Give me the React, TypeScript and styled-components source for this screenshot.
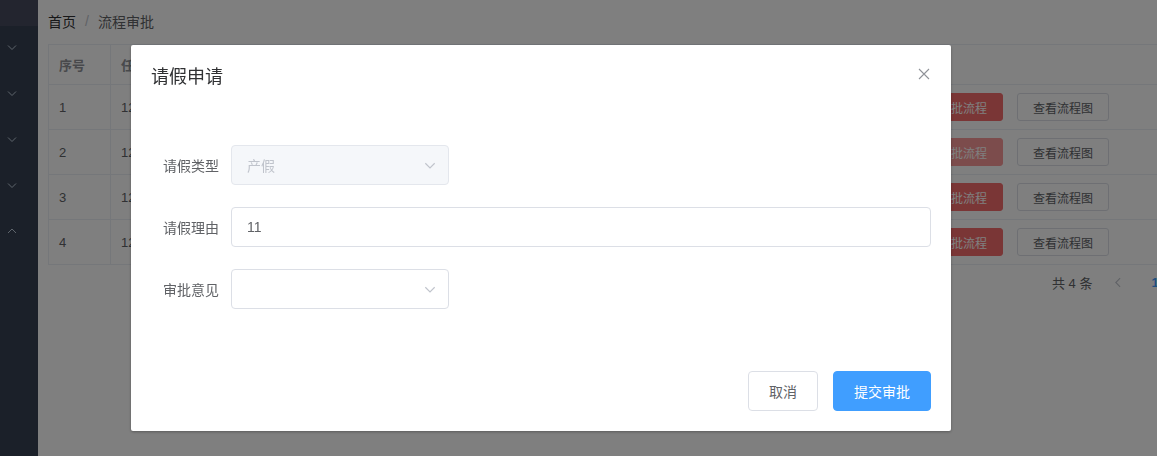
import styled, { createGlobalStyle } from 'styled-components';

const GlobalStyle = createGlobalStyle`
    html, body {
        margin: 0;
        padding: 0;
        height: 100%;
        overflow: hidden;
    }
    body {
        font-family: 'Liberation Sans', 'Noto Sans CJK SC', sans-serif;
        font-size: 14px;
        color: #606266;
        background: #ffffff;
    }
    * {
        box-sizing: border-box;
    }
`;

const Layout = styled.div`
    display: flex;
    width: 100%;
    height: 456px;
`;
const Sidebar = styled.aside`
    width: 38px;
    flex-shrink: 0;
    display: flex;
    flex-direction: column;
    background-color: #364052;
`;
const SideLogo = styled.div`
    height: 26px;
    background-color: #464a5e;
`;
const SideItem = styled.div`
    height: 46px;
    display: flex;
    align-items: center;
    padding-left: 6px;
    padding-bottom: 4px;
    color: #bfcbd9;
`;
const Main = styled.main`
    flex: 1;
    min-width: 0;
    padding: 11px 0 0 10px;
    overflow: hidden;
`;
const Breadcrumb = styled.div`
    display: flex;
    align-items: center;
    height: 20px;
    font-size: 14px;
    color: #303133;
    margin-bottom: 13px;
`;
const Crumb = styled.span<{ $last?: boolean }>`
    color: ${p => (p.$last ? '#606266' : '#303133')};
`;
const Separator = styled.span`
    margin: 0 9px;
    color: #c0c4cc;
`;
const Table = styled.table`
    width: 1200px;
    border-collapse: collapse;
    font-size: 14px;
    color: #606266;
    table-layout: fixed;
`;
const Th = styled.th<{ $w?: number }>`
    width: ${p => (p.$w ? `${p.$w}px` : 'auto')};
    height: 40px;
    padding: 0 10px;
    text-align: left;
    font-weight: 700;
    color: #909399;
    border: 1px solid #ebeef5;
    font-size: 13px;
`;
const Td = styled.td`
    height: 45px;
    padding: 0 10px;
    border: 1px solid #ebeef5;
    white-space: nowrap;
    font-size: 13px;
`;
const Ops = styled.div`
    display: flex;
    gap: 14px;
    padding-left: 2px;
`;
const SmallButton = styled.button<{ $danger?: boolean; $light?: boolean }>`
    height: 28px;
    padding: 0 15px;
    font-size: 12px;
    font-family: inherit;
    border-radius: 3px;
    border: 1px solid
        ${p => (p.$danger ? (p.$light ? '#f89898' : '#f56c6c') : '#dcdfe6')};
    background: ${p =>
        p.$danger ? (p.$light ? '#f89898' : '#f56c6c') : '#ffffff'};
    color: ${p => (p.$danger ? '#ffffff' : '#606266')};
`;
const Pagination = styled.div`
    display: flex;
    align-items: center;
    height: 32px;
    margin-top: 1px;
    padding-left: 1004px;
    font-size: 13px;
    color: #606266;
    white-space: nowrap;
`;
const PageTotal = styled.span`
    margin-right: 20px;
`;
const PagePrev = styled.span`
    color: #c0c4cc;
    margin-right: 26px;
    display: flex;
`;
const PageNum = styled.span`
    color: #409eff;
    font-weight: 700;
`;

const Overlay = styled.div`
    position: fixed;
    inset: 0;
    background: rgba(0, 0, 0, 0.5);
    display: flex;
    align-items: flex-start;
    padding: 45px 0 0 131px;
`;
const Dialog = styled.div`
    width: 820px;
    background: #ffffff;
    border-radius: 2px;
    box-shadow: 0 1px 3px rgba(0, 0, 0, 0.3);
    display: flex;
    flex-direction: column;
`;
const DialogHeader = styled.div`
    display: flex;
    justify-content: space-between;
    align-items: center;
    padding: 20px 20px 10px;
`;
const DialogTitle = styled.span`
    font-size: 18px;
    line-height: 24px;
    color: #303133;
`;
const CloseButton = styled.span`
    display: flex;
    color: #909399;
    margin-top: -7px;
    margin-right: 1px;
`;
const DialogBody = styled.div`
    padding: 46px 20px 30px;
`;
const FormItem = styled.div`
    display: flex;
    align-items: center;
    margin-bottom: 22px;
`;
const Label = styled.label`
    width: 80px;
    padding-right: 12px;
    text-align: right;
    font-size: 14px;
    color: #606266;
`;
const InputBox = styled.div<{ $width?: number; $disabled?: boolean }>`
    width: ${p => (p.$width ? `${p.$width}px` : 'auto')};
    flex: ${p => (p.$width ? 'none' : '1')};
    height: 40px;
    display: flex;
    align-items: center;
    justify-content: space-between;
    padding: 0 15px;
    border: 1px solid ${p => (p.$disabled ? '#e4e7ed' : '#dcdfe6')};
    border-radius: 4px;
    background: ${p => (p.$disabled ? '#f5f7fa' : '#ffffff')};
    color: ${p => (p.$disabled ? '#c0c4cc' : '#606266')};
    font-size: 14px;
`;
const Arrow = styled.span`
    display: flex;
    color: #c0c4cc;
    margin-right: -4px;
`;
const DialogFooter = styled.div`
    display: flex;
    justify-content: flex-end;
    gap: 15px;
    padding: 10px 20px 20px;
`;
const Button = styled.button<{ $primary?: boolean }>`
    height: 40px;
    padding: 0 20px;
    font-size: 14px;
    font-family: inherit;
    border-radius: 4px;
    border: 1px solid ${p => (p.$primary ? '#409eff' : '#dcdfe6')};
    background: ${p => (p.$primary ? '#409eff' : '#ffffff')};
    color: ${p => (p.$primary ? '#ffffff' : '#606266')};
`;

type Dir = 'up' | 'down' | 'left';
const chevronPaths: Record<Dir, string> = {
    up: 'M2 8 L6 4 L10 8',
    down: 'M2 4.5 L6 8.5 L10 4.5',
    left: 'M7.5 2 L3.5 6 L7.5 10',
};
const Chevron = ({ dir = 'down', size = 12 }: { dir?: Dir; size?: number }) => (
    <svg width={size} height={size} viewBox="0 0 12 12" fill="none">
        <path d={chevronPaths[dir]} stroke="currentColor" strokeWidth="1" />
    </svg>
);

const rows = [
    { id: 1, light: false },
    { id: 2, light: true },
    { id: 3, light: false },
    { id: 4, light: false },
];

export default function App() {
    return (
        <>
            <GlobalStyle />
            <Layout>
                <Sidebar>
                    <SideLogo />
                    <SideItem><Chevron /></SideItem>
                    <SideItem><Chevron /></SideItem>
                    <SideItem><Chevron /></SideItem>
                    <SideItem><Chevron /></SideItem>
                    <SideItem><Chevron dir="up" /></SideItem>
                </Sidebar>
                <Main>
                    <Breadcrumb>
                        <Crumb>首页</Crumb>
                        <Separator>/</Separator>
                        <Crumb $last>流程审批</Crumb>
                    </Breadcrumb>
                    <Table>
                        <thead>
                            <tr>
                                <Th $w={62}>序号</Th>
                                <Th $w={260}>任务ID</Th>
                                <Th $w={200}>任务名称</Th>
                                <Th $w={340}>创建时间</Th>
                                <Th>操作</Th>
                            </tr>
                        </thead>
                        <tbody>
                            {rows.map(r => (
                                <tr key={r.id}>
                                    <Td>{r.id}</Td>
                                    <Td>{12500 + r.id * 3}</Td>
                                    <Td>请假申请</Td>
                                    <Td>2023-05-12 10:2{r.id}:08</Td>
                                    <Td>
                                        <Ops>
                                            <SmallButton $danger $light={r.light}>审批流程</SmallButton>
                                            <SmallButton>查看流程图</SmallButton>
                                        </Ops>
                                    </Td>
                                </tr>
                            ))}
                        </tbody>
                    </Table>
                    <Pagination>
                        <PageTotal>共 4 条</PageTotal>
                        <PagePrev><Chevron dir="left" size={13} /></PagePrev>
                        <PageNum>1</PageNum>
                    </Pagination>
                </Main>
            </Layout>
            <Overlay>
                <Dialog>
                    <DialogHeader>
                        <DialogTitle>请假申请</DialogTitle>
                        <CloseButton>
                            <svg width="12" height="12" viewBox="0 0 12 12">
                                <path d="M1 1 L11 11 M11 1 L1 11" stroke="currentColor" strokeWidth="1.1" />
                            </svg>
                        </CloseButton>
                    </DialogHeader>
                    <DialogBody>
                        <FormItem>
                            <Label>请假类型</Label>
                            <InputBox $width={218} $disabled>
                                产假
                                <Arrow><Chevron size={14} /></Arrow>
                            </InputBox>
                        </FormItem>
                        <FormItem>
                            <Label>请假理由</Label>
                            <InputBox>11</InputBox>
                        </FormItem>
                        <FormItem>
                            <Label>审批意见</Label>
                            <InputBox $width={218}>
                                <span />
                                <Arrow><Chevron size={14} /></Arrow>
                            </InputBox>
                        </FormItem>
                    </DialogBody>
                    <DialogFooter>
                        <Button>取消</Button>
                        <Button $primary>提交审批</Button>
                    </DialogFooter>
                </Dialog>
            </Overlay>
        </>
    );
}
